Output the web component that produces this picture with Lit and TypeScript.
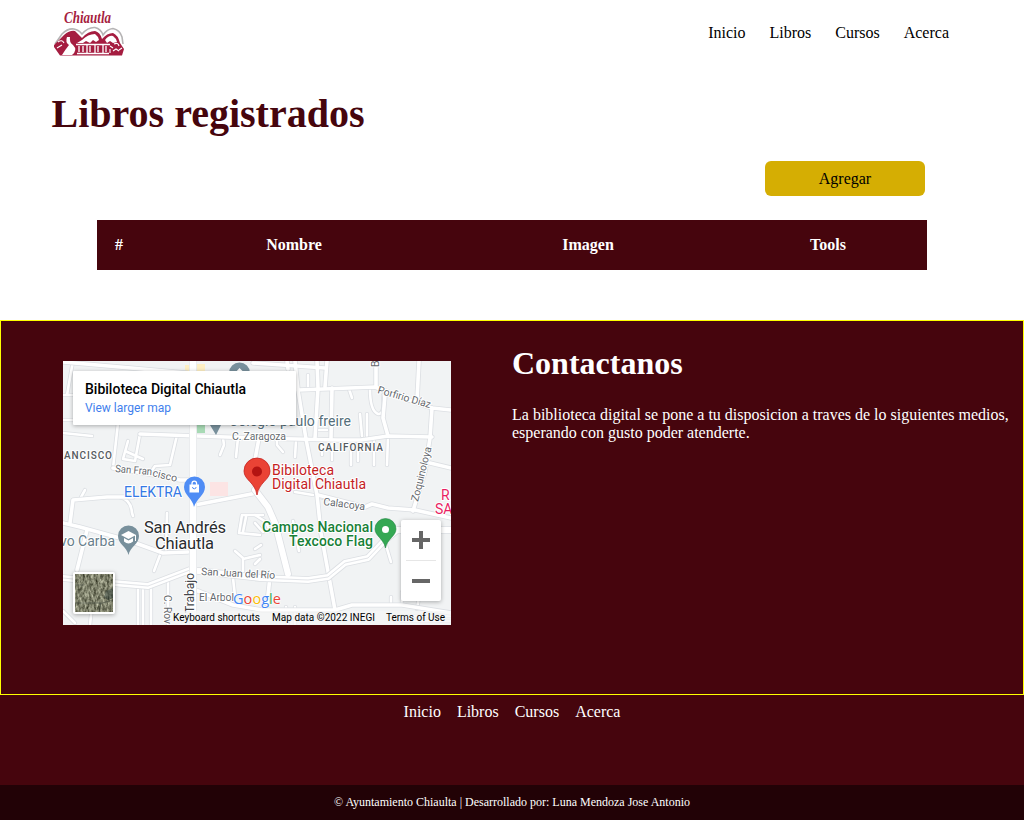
import { LitElement, html, css, svg } from "lit";
import { customElement } from "lit/decorators.js";

const LINKS = ["Inicio", "Libros", "Cursos", "Acerca"];

const MINOR = [
  "M10 0L4 34M0 34H9", "M0 59L10 59L54 62", "M0 72L29 75", "M55 62L50 107",
  "M77 73L72 100L60 98L65 80M62 90L80 98", "M114 74L107 104L92 105L88 111",
  "M160 77L161 84L157 94", "M175 77L173 96", "M214 77V84L220 91",
  "M286 28L289 37M307 28Q307 50 315 53Q322 54 320 34", "M297 53L299 75M304 53V75",
  "M252 69H264", "M233 80L232 96M259 80V94M269 80V99M288 80V104M295 80V100M311 80V104M325 76L324 104",
  "M245 14V27", "M22 129L17 138", "M56 136Q68 138 69 152L70 155", "M104 152L103 190",
  "M97 194L91 210", "M170 217L172 235", "M200 154H179L176 172L197 174M183 156L180 171",
  "M172 190L180 197V211M180 198L197 194", "M192 154L203 161L207 170M192 162L200 171", "M192 188L198 184M192 203L197 198",
  "M322 181L328 201", "M223 246L225 264M232 246V264", "M328 244V236M339 244V231M354 248L356 236",
  "M88 227V264M75 226V264M80 226V264", "M105 221L105 264", "M31 226L27 264", "M230 160L236 190",
  "M232 131L250 134M254 135L268 139", "M0 250L12 262", "M338 255H388M338 260H388",
];
const MEDIUM = [
  "M0 1L124 12M190 2L262 7", "M224 0L225 8M232 0L235 29L243 78L254 134L258 172L272 249",
  "M254 0L255 27L252 77", "M264 0L262 26", "M235 29L312 26Q348 40 369 47L388 49",
  "M313 0V26", "M356 0L354 39", "M369 47L367 77L362 110L350 150",
  "M269 27L268 77", "M322 34L320 57L325 75", "M77 73L192 77L274 79L298 79L325 75L369 76",
  "M50 107L80 112L117 119L129 119", "M132 144L194 132", "M196 77L191 104",
  "M367 102L388 107", "M255 134L302 146L309 143L325 147L352 149L388 157",
  "M0 162L17 166L64 179L100 192L125 191", "M70 136H44L10 139L7 162", "M24 169L14 209",
  "M130 228L170 244L199 249L272 249L289 244L339 244L388 252", "M207 216L204 243",
];
const MAJOR = [
  "M0 217L50 222L85 225L127 209L197 217L245 219L265 216L282 202L305 197L322 179L334 169H388",
  "M192 129L205 146L212 162L225 213",
];

@customElement("map-card")
class MapCard extends LitElement {
  static styles = css`
    :host { display: block; width: 388px; height: 264px; }
    .map { display: block; font-family: Roboto, sans-serif; }
    .edge { fill: none; stroke: #dcdfe3; stroke-linejoin: round; stroke-linecap: round; }
    .road { fill: none; stroke: #fff; stroke-linejoin: round; stroke-linecap: round; }
    .halo { paint-order: stroke; stroke: #fff; stroke-width: 2px; stroke-linejoin: round; }
    .street { font-size: 10.5px; fill: #65696e; }
    .area { font-size: 10px; fill: #555a60; letter-spacing: 1px; font-weight: 500; }
    .town { font-size: 16.5px; fill: #2b2d30; }
    .place { font-size: 14px; }
    .terms { font-size: 10px; fill: #000; }
    .panel { fill: #fff; filter: drop-shadow(0 1px 2px rgba(0, 0, 0, 0.3)); }
  `;

  private roads(list: string[], width: number) {
    return [
      ...list.map((d) => svg`<path class="edge" stroke-width=${width + 1.6} d=${d}></path>`),
      ...list.map((d) => svg`<path class="road" stroke-width=${width} d=${d}></path>`),
    ];
  }

  render() {
    return html`
      <svg class="map" width="388" height="264" viewBox="0 0 388 264">
        <defs>
          <filter id="terrain" x="0" y="0" width="1" height="1" color-interpolation-filters="sRGB">
            <feTurbulence type="fractalNoise" baseFrequency="0.45 0.22" numOctaves="3" seed="8"></feTurbulence>
            <feColorMatrix values="0.8 0 0 0 0.1  0.8 0 0 0 0.11  0.75 0 0 0 0.05  0 0 0 0 1"></feColorMatrix>
          </filter>
        </defs>
        <rect width="388" height="264" fill="#f1f3f4"></rect>
        <rect x="122" y="4" width="5" height="10" fill="#feefc3"></rect>
        <rect x="134" y="3" width="8" height="9" fill="#feefc3"></rect>
        <rect x="133" y="62" width="9" height="10" fill="#a8dab5"></rect>
        <rect x="147" y="121" width="18" height="14" fill="#fce4e4"></rect>
        ${this.roads(MINOR, 2.6)} ${this.roads(MEDIUM, 3.6)} ${this.roads(MAJOR, 6)}
        <path d="M0 217L50 222L85 225L127 209M197 217L245 219L265 216L282 202L305 197L322 179" fill="none" stroke="#e2e4e8"></path>
        <path class="edge" stroke-width="8" d="M130 0V264"></path>
        <path class="road" stroke-width="6.8" d="M130 0V264"></path>

        <g class="street halo">
          <text x="169" y="79" textLength="54">C. Zaragoza</text>
          <text transform="translate(314 32) rotate(16)" textLength="55">Porfirio Díaz</text>
          <text transform="translate(316 6) rotate(-90)">B</text>
          <text transform="translate(52 111) rotate(5)" textLength="37" lengthAdjust="spacingAndGlyphs">San Fran</text>
          <text transform="translate(89 115) rotate(14)" textLength="25">cisco</text>
          <text transform="translate(355 141) rotate(-76)" textLength="56">Zoquinoloya</text>
          <text transform="translate(260 144) rotate(7)" textLength="42">Calacoya</text>
          <text transform="translate(138 214) rotate(3)" textLength="74">San Juan del Río</text>
          <text x="136" y="240" textLength="35">El Arbol</text>
          <text transform="translate(101 234) rotate(90)" textLength="29" lengthAdjust="spacingAndGlyphs">C. Rov</text>
          <text transform="translate(131 252) rotate(-90)" font-size="12" fill="#45484c" textLength="40">Trabajo</text>
        </g>
        <g class="area halo">
          <text x="1" y="98" textLength="49">ANCISCO</text>
          <text x="255" y="90" textLength="66">CALIFORNIA</text>
        </g>
        <g class="place halo">
          <text x="166" y="65" fill="#546e7a" textLength="122">Colegio paulo freire</text>
          <text x="-3" y="185" fill="#68808c" textLength="55">vo Carba</text>
          <text x="61" y="136" fill="#3478e5" textLength="58">ELEKTRA</text>
          <text x="209" y="114" fill="#c5221f" textLength="62">Bibiloteca</text>
          <text x="209" y="128" fill="#c5221f" textLength="94">Digital Chiautla</text>
          <text x="199" y="171" fill="#188038" font-weight="500" textLength="111">Campos Nacional</text>
          <text x="226" y="185" fill="#188038" font-weight="500" textLength="84">Texcoco Flag</text>
          <text x="378" y="139" fill="#e91e63">R</text>
          <text x="372" y="153" fill="#e91e63">SA</text>
        </g>
        <g class="town halo">
          <text x="81" y="172" textLength="82">San Andrés</text>
          <text x="92" y="188" textLength="59">Chiautla</text>
        </g>

        <path d="M166 12a10 10 0 1 1 21 0zM147 64h11l-5 10z" fill="#78909c"></path>
        <path d="M172 12l4.500-5 5 5z" fill="#fff"></path>
        <path d="M131 146C130 138 121 134 121 126A10.300 10.300 0 0 1 142 126C142 134 133 138 131 146Z" fill="#4f8df5"></path>
        <path d="M126.500 123.500h9.500v8h-9.500z" fill="#fff"></path>
        <path d="M129 124v-1.500a2.300 2.300 0 0 1 4.600 0v1.500" fill="none" stroke="#fff" stroke-width="1.300"></path>
        <path d="M129.500 126a1.800 1.800 0 0 0 3.600 0" fill="none" stroke="#4f8df5"></path>
        <path d="M65.500 194C64 186 55 183 55 175A10.300 10.300 0 0 1 76 175C76 183 67 186 65.500 194Z" fill="#78909c"></path>
        <path d="M58 174l7.500-4 7.500 4-7.500 4zM61 177v3.500q4.500 4 9 0V177l-4.500 2.500zM72 174h1v6h-1z" fill="#fff"></path>
        <path d="M322.500 187C321 178 312 175 312 168A10.300 10.300 0 0 1 333 168C333 175 324 178 322.500 187Z" fill="#34a853" stroke="#238444" stroke-width=".6"></path>
        <circle cx="322.500" cy="168.500" r="3.500" fill="#fff"></circle>
        <path d="M194 134C192 121 181 119 181 110A13 13 0 0 1 207 110C207 119 196 121 194 134Z" fill="#ea4335" stroke="#c5221f" stroke-width=".8"></path>
        <circle cx="194" cy="110.500" r="5" fill="#b31412"></circle>

        <rect class="panel" x="10" y="10" width="223" height="54" rx="1"></rect>
        <text x="22" y="33" font-size="14" font-weight="500" fill="#000" textLength="161">Bibiloteca Digital Chiautla</text>
        <text x="22" y="51" font-size="12" fill="#427fed" textLength="86">View larger map</text>

        <rect class="panel" x="338" y="159" width="40" height="81" rx="2"></rect>
        <path d="M343 199.500h30" stroke="#e6e6e6"></path>
        <path d="M349 179h18M358 170v18M349 220h18" stroke="#666" stroke-width="4"></path>

        <rect class="panel" x="10" y="211" width="42" height="42" rx="2"></rect>
        <rect x="12" y="213" width="38" height="38" filter="url(#terrain)"></rect>
        <path d="M12 242h27M39 242l11-3M38 242l-2 9M12 224h9" stroke="#3d453b" opacity=".5" fill="none"></path>
        <path d="M43 230l7-3v10l-5 2-4-3z" fill="#2c3a35" opacity=".5"></path>

        <text x="170" y="243" font-family="'Open Sans', sans-serif" font-size="14.5" font-weight="500" textLength="48"
          paint-order="stroke" stroke="#fff" stroke-width="1"
          ><tspan fill="#4285f4">G</tspan><tspan fill="#ea4335">o</tspan><tspan fill="#fbbc04">o</tspan><tspan fill="#4285f4">g</tspan><tspan fill="#34a853">l</tspan><tspan fill="#ea4335">e</tspan></text>
        <rect x="108" y="250" width="280" height="14" fill="#f5f5f5" opacity=".7"></rect>
        <g class="terms">
          <text x="110" y="260" textLength="87">Keyboard shortcuts</text>
          <text x="209" y="260" textLength="103">Map data ©2022 INEGI</text>
          <text x="323" y="260" textLength="59">Terms of Use</text>
        </g>
      </svg>
    `;
  }
}

@customElement("town-logo")
class TownLogo extends LitElement {
  static styles = css`
    :host { display: block; width: 72px; height: 48px; }
    .logo { display: block; overflow: visible; }
    .name { font: italic bold 16px "Liberation Serif", serif; fill: #a51d40; }
  `;
  render() {
    return html`
      <svg class="logo" width="72" height="48" viewBox="0 0 72 48">
        <text class="name" x="11" y="14" textLength="47" lengthAdjust="spacingAndGlyphs">Chiautla</text>
        <path d="M2 35L9 25Q15 19 21 20Q26 21 29 25Q35 18 42 18.500Q48 20 50 26Q54 20 60 19.500Q67 21 69 28L70 35" fill="none" stroke="#b5b3b4" stroke-width="1.600"></path>
        <path d="M1 36L11 26Q17 21 22 22L29 29Q35 22 42 22Q47 23 49 30Q54 24 60 24Q65 26 67 34L71 40L69 46.500H7L1 38Z" fill="#a51d40"></path>
        <path d="M14 28Q12 33 16 36Q12 41 9 46H19Q25 41 20 36Q16 33 17 28Z" fill="#fff"></path>
        <path d="M29 31Q35 25 42 25Q45 27 46 31L43 33L40 31L37 34L33 32L30 34H24Z" fill="#fff"></path>
        <path d="M52 31Q56 26 60 27Q63 29 64 33L60 34L57 32L54 34Z" fill="#fff"></path>
        <path d="M23 35.500H57M26 37v6M30 37v6M34 36v8M37 37v6M42 36v8M45 37v6M50 36v8M53 37v6M24 44.500H56" stroke="#fff" stroke-width="1.300" fill="none"></path>
        <path d="M5 33Q9 30 11 34M4 39L9 36M57 37l3 2M61 35q4-2 5 2M60 42l3-2 3 2M66 41l3-2M57 44v-4" stroke="#fff" stroke-width="1.100" fill="none"></path>
      </svg>
    `;
  }
}

@customElement("app-root")
class AppRoot extends LitElement {
  static styles = css`
    :host { display: block; height: 820px; background: #fff; color: #000; font: 16px/18px "Liberation Serif", serif; }
    .page { display: flex; flex-direction: column; height: 100%; }
    .header { display: flex; justify-content: space-between; align-items: center; height: 66px; padding: 0 75px 0 53px; }
    .nav { display: flex; gap: 24px; }
    .main { height: 254px; }
    .title { margin: 0; padding: 25px 0 0 51.5px; font-size: 40px; line-height: 46px; color: #46050d; }
    .actions { display: flex; justify-content: flex-end; padding: 24px 99px 24px 0; }
    .add { width: 160px; height: 35px; padding: 0; border: 0; border-radius: 6px; background: #d5ae03; color: #000; font: inherit; }
    .table { width: 830px; margin-left: 97px; border-collapse: collapse; table-layout: fixed; background: #46050d; color: #fff; }
    .cell { height: 50px; padding: 0; text-align: center; font-weight: bold; }
    .c1 { width: 44px; }
    .c2 { width: 306px; }
    .c3 { width: 282px; }
    .c4 { width: 198px; }
    .contact { display: grid; grid-template-columns: 449px 1fr; box-sizing: border-box; height: 375px; border: 1px solid #ff0; background: #46050d; color: #fff; padding-left: 62px; }
    .map { margin-top: 40px; }
    .heading { margin: 24px 0 25px; font-size: 32px; line-height: 36px; }
    .text { margin: 0; }
    .links { display: flex; flex: 1; justify-content: center; gap: 16px; padding-top: 8px; background: #46050d; color: #fff; }
    .legal { height: 35px; line-height: 34px; text-align: center; font-size: 12px; background: #220206; color: #fff; }
  `;
  render() {
    return html`
      <div class="page">
        <header class="header">
          <town-logo></town-logo>
          <nav class="nav">${LINKS.map((l) => html`<span>${l}</span>`)}</nav>
        </header>
        <main class="main">
          <h1 class="title">Libros registrados</h1>
          <div class="actions"><button class="add">Agregar</button></div>
          <table class="table">
            <thead>
              <tr>
                <th class="cell c1">#</th>
                <th class="cell c2">Nombre</th>
                <th class="cell c3">Imagen</th>
                <th class="cell c4">Tools</th>
              </tr>
            </thead>
          </table>
        </main>
        <section class="contact">
          <map-card class="map"></map-card>
          <div>
            <h2 class="heading">Contactanos</h2>
            <p class="text">La biblioteca digital se pone a tu disposicion a traves de lo siguientes medios, esperando con gusto poder atenderte.</p>
          </div>
        </section>
        <nav class="links">${LINKS.map((l) => html`<span>${l}</span>`)}</nav>
        <footer class="legal">© Ayuntamiento Chiaulta | Desarrollado por: Luna Mendoza Jose Antonio</footer>
      </div>
    `;
  }
}
